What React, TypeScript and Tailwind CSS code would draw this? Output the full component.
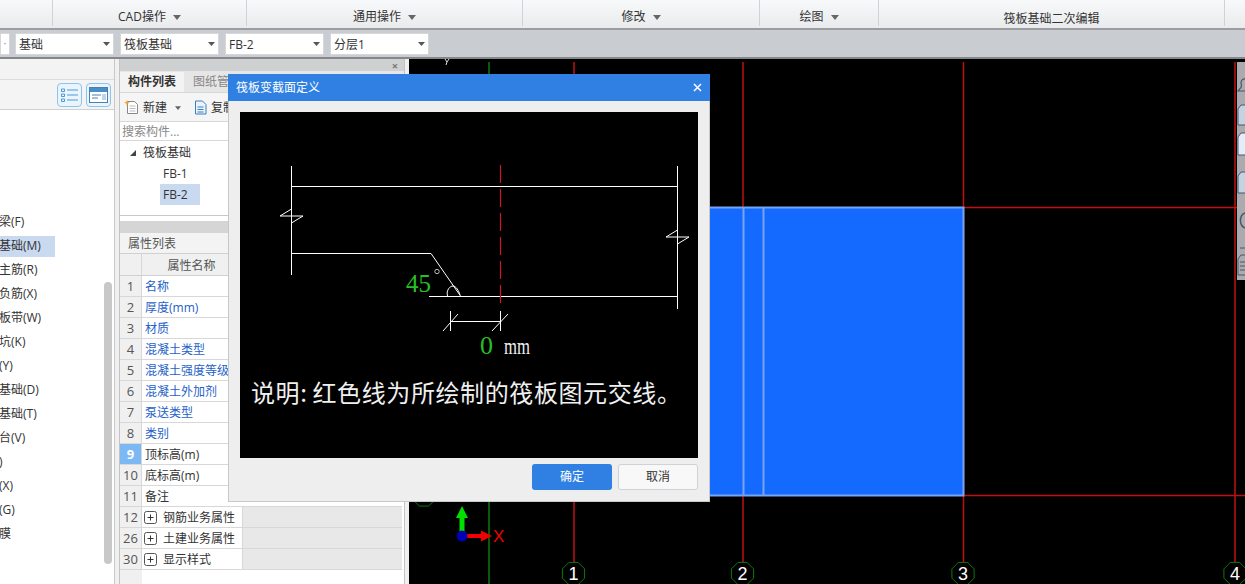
import React from "react";

const Caret = ({ c = "#666", small = false }: { c?: string; small?: boolean }) => (
  <svg width={small ? 6 : 8} height={small ? 4 : 5} viewBox="0 0 8 5" className="shrink-0"><path d="M0 0h8L4 5z" fill={c} /></svg>
);

const Section = ({ w, label, caret = true }: { w: string; label: string; caret?: boolean }) => (
  <div className={`${w} flex h-[26px] shrink-0 items-center justify-center gap-[7px] border-r border-[#d0d3d6] pt-[8px] text-xs text-[#333]`}>
    <span>{label}</span>
    {caret && <Caret />}
  </div>
);

const Combo = ({ label, w = "w-[99px]" }: { label: string; w?: string }) => (
  <div className={`${w} flex h-[22px] shrink-0 items-center justify-between border border-[#d5d7da] bg-white pl-[3px] pr-[3px] text-xs text-[#333]`}>
    <span className="pt-[2px]">{label}</span>
    <svg width="7" height="4" viewBox="0 0 7 4"><path d="M0 0h7L3.500 4z" fill="#555" /></svg>
  </div>
);

const leftRows: { t: string; active?: boolean }[] = [
  { t: "梁(F)" },
  { t: "基础(M)", active: true },
  { t: "主筋(R)" },
  { t: "负筋(X)" },
  { t: "板带(W)" },
  { t: "坑(K)" },
  { t: "(Y)" },
  { t: "基础(D)" },
  { t: "基础(T)" },
  { t: "台(V)" },
  { t: ")" },
  { t: "(X)" },
  { t: "(G)" },
  { t: "膜" },
];

const ListIconBtn = ({ children }: { children: React.ReactNode }) => (
  <div className="flex h-[24px] w-[25px] items-center justify-center rounded-[4px] border border-[#8cc4ee] bg-[#eaf4fc]">{children}</div>
);

const props: { n: string; t: string; blue?: boolean; sel?: boolean }[] = [
  { n: "1", t: "名称", blue: true },
  { n: "2", t: "厚度(mm)", blue: true },
  { n: "3", t: "材质", blue: true },
  { n: "4", t: "混凝土类型", blue: true },
  { n: "5", t: "混凝土强度等级", blue: true },
  { n: "6", t: "混凝土外加剂", blue: true },
  { n: "7", t: "泵送类型", blue: true },
  { n: "8", t: "类别", blue: true },
  { n: "9", t: "顶标高(m)", sel: true },
  { n: "10", t: "底标高(m)" },
  { n: "11", t: "备注" },
];
const groups = [
  { n: "12", t: "钢筋业务属性" },
  { n: "26", t: "土建业务属性" },
  { n: "30", t: "显示样式" },
];

const Plus = () => (
  <svg width="13" height="13" viewBox="0 0 13 13" className="shrink-0">
    <rect x="0.5" y="0.5" width="12" height="12" rx="2" fill="#fff" stroke="#555" />
    <path d="M3.500 6.500h6M6.500 3.500v6" stroke="#333" />
  </svg>
);

const octagon = (cx: number, cy: number, r: number) =>
  Array.from({ length: 8 }, (_, i) => {
    const a = (Math.PI / 4) * i + Math.PI / 8;
    return `${(cx + r * Math.cos(a)).toFixed(1)},${(cy + r * Math.sin(a)).toFixed(1)}`;
  }).join(" ");

const Canvas = () => (
  <svg viewBox="409 59 836 525" className="block h-full w-full" fontFamily="'Liberation Sans',sans-serif">
    <rect x="409" y="59" width="836" height="525" fill="#000" />
    <path d="M489 62V584" stroke="#0c7a0c" strokeWidth="1.500" />
    <path d="M574 62V584M743 62V584M963.500 62V584M1235 62V584M963 207.500H1237M963 495.500H1245" stroke="#c01015" strokeWidth="1.500" fill="none" />
    <rect x="680" y="207.500" width="283.500" height="288" fill="#1469ff" stroke="#76a4f2" strokeWidth="2" />
    <path d="M743.500 207V496M763.500 207V496" stroke="#76a4f2" strokeWidth="2" />
    <polygon points={octagon(424, 495, 12)} fill="none" stroke="#0c7a0c" />
    {[[573.5, "1"], [742.5, "2"], [963, "3"], [1235, "4"]].map(([x, t]) => (
      <g key={t as string}>
        <polygon points={octagon(x as number, 573.5, 12)} fill="#000" stroke="#0c7a0c" />
        <text x={x as number} y="580" fill="#fff" fontSize="18" textAnchor="middle">{t}</text>
      </g>
    ))}
    <path d="M459.500 534V518h-3.500l6-12 6 12h-3.500v16z" fill="#00e000" />
    <path d="M462 534h19v-3.500l11 5.500-11 5.500V538h-19z" fill="#f00000" />
    <circle cx="462" cy="536" r="5.500" fill="#0000b0" />
    <text x="493" y="542" fill="#f00000" fontSize="17">X</text>
    <path d="M445 59l2 3 2-3M447 62l-1 3" stroke="#ddd" fill="none" />
  </svg>
);

const Diagram = () => (
  <svg viewBox="240 112 458 346" className="block h-[346px] w-[458px]">
    <rect x="240" y="112" width="458" height="346" fill="#000" />
    <g stroke="#fff" fill="none" strokeWidth="1">
      <path d="M291.500 166V275M291 186.500H677M677.500 166V309M291 253.500H431L460.500 296M429 296.500H677" />
      <path d="M291.500 209L280 216H303L291.500 223M677.500 230L666 237H689L677.500 244" />
      <path d="M450.500 311V331M500.500 311V331M450 321.500H500M443 331L458 314M492 331L508 314" />
      <path d="M447.500 296C446 290 450 286 453 286C456 286 459 291 460 295" />
    </g>
    <circle cx="437" cy="271.500" r="2.200" fill="none" stroke="#bbb" />
    <path d="M500.500 165V303" stroke="#d0152a" strokeWidth="1.200" strokeDasharray="18 6" />
    <text x="406" y="292" fill="#26c026" fontSize="25" fontFamily="'Liberation Serif',serif">45</text>
    <text x="480" y="354" fill="#26c026" fontSize="26" fontFamily="'Liberation Serif',serif">0</text>
    <text x="504" y="354" fill="#eee" fontSize="23" textLength="26" lengthAdjust="spacingAndGlyphs" fontFamily="'Liberation Serif',serif">mm</text>
    <text x="251" y="402" fill="#f0f0f0" fontSize="24" letterSpacing="0.6" fontFamily="'Noto Sans CJK SC',sans-serif">说明:<tspan dx="5">红色线为所绘制的筏板图元交线。</tspan></text>
  </svg>
);

export default function App() {
  return (
    <div className="relative flex h-[584px] w-[1245px] flex-col overflow-hidden bg-[#f0f0f0] font-['Open_Sans','Noto_Sans_CJK_SC',sans-serif] text-xs text-[#333]">
      {/* ribbon */}
      <div className="flex h-[30px] shrink-0 items-start border-b-2 border-[#9b9da0] bg-gradient-to-b from-[#f8f9fa] to-[#e9ebed]">
        <Section w="w-[53px]" label="" caret={false} />
        <Section w="w-[194px]" label="CAD操作" />
        <Section w="w-[276px]" label="通用操作" />
        <Section w="w-[237px]" label="修改" />
        <Section w="w-[119px]" label="绘图" />
        <div className="flex h-[26px] w-[346px] shrink-0 items-start justify-center border-r border-[#d0d3d6] pt-[11px] text-xs">筏板基础二次编辑</div>
      </div>
      {/* combos */}
      <div className="flex h-[29px] shrink-0 items-center gap-[5px] border-b-2 border-[#85878a] bg-[#c9ccd1] pt-[1px]">
        <Combo label="" w="w-[10px]" />
        <Combo label="基础" />
        <div className="ml-px"><Combo label="筏板基础" /></div>
        <div className="ml-px"><Combo label="FB-2" /></div>
        <div className="ml-px"><Combo label="分层1" /></div>
      </div>
      {/* main */}
      <div className="flex min-h-0 flex-1">
        {/* left panel */}
        <div className="flex w-[115px] shrink-0 flex-col border-r border-[#c8c8c8] bg-white">
          <div className="h-[21px] shrink-0 border-b border-[#dcdcdc] bg-[#f3f3f3]" />
          <div className="flex h-[30px] shrink-0 items-center justify-end gap-[4px] border-b border-[#d0d0d0] bg-[#f4f4f4] pr-[3px]">
            <ListIconBtn>
              <svg width="19" height="16" viewBox="0 0 19 16" fill="none" stroke="#4a9ad8">
                <path d="M1.500 2h3v2.500h-3zM1.500 7h3v2.500h-3zM1.500 12h3v2.500h-3zM7 3h11M7 8h11M7 13h11" />
              </svg>
            </ListIconBtn>
            <ListIconBtn>
              <svg width="19" height="16" viewBox="0 0 19 16">
                <rect x="0.5" y="0.5" width="18" height="15" fill="#fff" stroke="#4a7fb0" />
                <rect x="1" y="1" width="17" height="4" fill="#4a8ec8" />
                <path d="M3 8h9M3 11h6" stroke="#4a7fb0" />
                <rect x="13" y="7" width="4" height="6" fill="#b9d6ee" />
              </svg>
            </ListIconBtn>
          </div>
          <div className="relative min-h-0 flex-1 pt-[100px]">
            {leftRows.map((r) => (
              <div key={r.t} className={`flex h-[24px] items-center overflow-hidden text-xs ${r.active ? "w-[55px]" : ""}`}>
                <span className={`flex h-[21px] w-full items-center -indent-px ${r.active ? "bg-[#c8d9f0]" : ""}`}>{r.t}</span>
              </div>
            ))}
            <div className="absolute left-[104px] top-[172px] h-[282px] w-[8px] rounded-[4px] bg-[#c8c8c8]" />
          </div>
        </div>
        <div className="w-[4px] shrink-0" />
        {/* middle panel */}
        <div className="flex w-[286px] shrink-0 flex-col border-x border-[#c4c4c4] bg-white">
          <div className="flex h-[12px] shrink-0 items-center justify-end bg-[#cfd0d2] pr-[6px] text-[11px] font-bold leading-none text-[#777]">×</div>
          <div className="flex h-[21px] shrink-0 bg-[#e6e6e6] pt-px">
            <div className="flex w-[64px] items-center justify-center bg-[#f3f3f3] font-bold text-[#333]">构件列表</div>
            <div className="flex w-[64px] items-center pl-[9px] text-[#888]">图纸管理</div>
          </div>
          <div className="flex h-[30px] shrink-0 items-center gap-[4px] border-y border-[#d8d8d8] bg-[#f5f5f5] pl-[4px] pt-px">
            <svg width="15" height="15" viewBox="0 0 15 15">
              <path d="M3.500 1.500h7l3 3v9h-10z" fill="#fff" stroke="#888" />
              <path d="M5.500 6h6M5.500 8.500h6M5.500 11h6" stroke="#bbb" />
              <path d="M3 0l.8 2L6 2.800 3.800 3.600 3 6 2.200 3.600 0 2.800 2.200 2z" fill="#f2a11e" />
            </svg>
            <span className="text-xs">新建</span>
            <span className="ml-[4px]"><Caret small /></span>
            <svg className="ml-[9px]" width="13" height="15" viewBox="0 0 13 15">
              <path d="M1.500 1h7l3.500 3.500v9.500h-10.500z" fill="#eaf3fb" stroke="#3c7fbe" />
              <path d="M3.500 7h6M3.500 9.500h6M3.500 12h6" stroke="#3c7fbe" />
            </svg>
            <span className="text-xs">复制</span>
          </div>
          <div className="flex h-[19px] shrink-0 items-center border-b border-[#d8d8d8] pl-[2px] pt-[2px] text-[#888]">搜索构件...</div>
          <div className="h-[75px] shrink-0 border-b border-[#c8c8c8] pt-[1px]">
            <div className="flex h-[21px] items-center gap-[7px] pl-[10px]">
              <svg width="6" height="6" viewBox="0 0 6 6"><path d="M6 0v6H0z" fill="#444" /></svg>
              <span>筏板基础</span>
            </div>
            <div className="flex h-[21px] items-center pl-[43px]">FB-1</div>
            <div className="ml-[40px] flex h-[21px] w-[40px] items-center bg-[#c8d9f0] pl-[3px]">FB-2</div>
          </div>
          <div className="h-[5px] shrink-0" />
          <div className="h-[12px] shrink-0 bg-[#d5d5d5]" />
          <div className="flex h-[21px] shrink-0 items-center border-b border-[#d0d0d0] bg-[#f3f3f3] pl-[8px] pt-px text-[#555]">属性列表</div>
          <div className="flex min-h-0 flex-1 flex-col">
            <div className="flex h-[22px] w-[282px] shrink-0 border-b border-[#d0d0d0] bg-[#f0f0f0]">
              <div className="w-[22px] border-r border-[#d8d8d8]" />
              <div className="flex w-[101px] items-center justify-center pr-[2px] pt-[2px] text-[#555]">属性名称</div>
            </div>
            {props.map((p) => (
              <div key={p.n} className="flex h-[21px] w-[282px] shrink-0 border-b border-[#d8d8d8]">
                <div className={`flex w-[22px] items-center justify-center border-r border-[#d8d8d8] pt-[2px] text-[13px] ${p.sel ? "bg-[#7cb8f4] font-bold text-white" : "bg-[#f0f0f0] text-[#555]"}`}>{p.n}</div>
                <div className={`flex w-[101px] items-center pl-[3px] pt-[2px] ${p.blue ? "text-[#2561c8]" : "text-[#333]"}`}>{p.t}</div>
              </div>
            ))}
            {groups.map((g) => (
              <div key={g.n} className="flex h-[21px] w-[282px] shrink-0 border-b border-[#d8d8d8]">
                <div className="flex w-[22px] items-center justify-center border-r border-[#d8d8d8] bg-[#f0f0f0] pt-[2px] text-[13px] text-[#555]">{g.n}</div>
                <div className="flex w-[101px] items-center gap-[6px] border-r border-[#d8d8d8] pl-[2px]">
                  <Plus />
                  <span className="pt-[2px]">{g.t}</span>
                </div>
                <div className="w-[159px] bg-[#e8e8e8]" />
              </div>
            ))}
            <div className="w-[22px] flex-1 bg-[#f0f0f0]" />
          </div>
        </div>
        <div className="w-[4px] shrink-0" />
        {/* canvas */}
        <div className="relative min-w-0 flex-1 bg-black">
          <Canvas />
          <div className="absolute right-0 top-[3px] h-[218px] w-[8px] overflow-hidden bg-[#a9abae]">
            <svg width="8" height="218" viewBox="0 0 8 218" fill="none" stroke="#46586e" className="block">
              <path d="M8 17a3.500 3.500 0 0 0-4 3.500c0 2 1 3 0 5L1 29h7" strokeWidth="1.200" />
              <path d="M9 63H1V47l3-4h5" fill="#c4d2e2" />
              <path d="M9 93H1V75l3-4h5" fill="#e4eefa" />
              <path d="M9 131H1V114l3-4h5" fill="#c4d2e2" />
              <path d="M8 151a7 8 0 0 0 0 15" strokeWidth="1.500" />
              <path d="M3 186h6M9 213H1V197l3-4h5M3 200h6M3 204h6M3 208h6" />
            </svg>
          </div>
        </div>
      </div>
      {/* dialog */}
      <div className="absolute left-[228px] top-[74px] flex h-[428px] w-[482px] flex-col border-x border-b border-[#c6c9cc] bg-[#eeeeee]">
        <div className="-mx-px flex h-[27px] shrink-0 items-center justify-between bg-[#2f80e2] pl-[8px] pr-[8px] text-xs text-white">
          <span>筏板变截面定义</span>
          <svg width="9" height="9" viewBox="0 0 9 9" stroke="#fff" strokeWidth="1.500"><path d="M1 1l7 7M8 1l-7 7" /></svg>
        </div>
        <div className="mx-[11px] mt-[11px] shrink-0">
          <Diagram />
        </div>
        <div className="mx-[11px] mt-[6px] flex justify-end gap-[6px]">
          <button className="flex h-[26px] w-[80px] items-center justify-center rounded-[3px] bg-[#2f80e2] text-xs text-white">确定</button>
          <button className="flex h-[26px] w-[80px] items-center justify-center rounded-[3px] border border-[#cfd3d8] bg-[#f8f8f8] text-xs text-[#333]">取消</button>
        </div>
      </div>
    </div>
  );
}
